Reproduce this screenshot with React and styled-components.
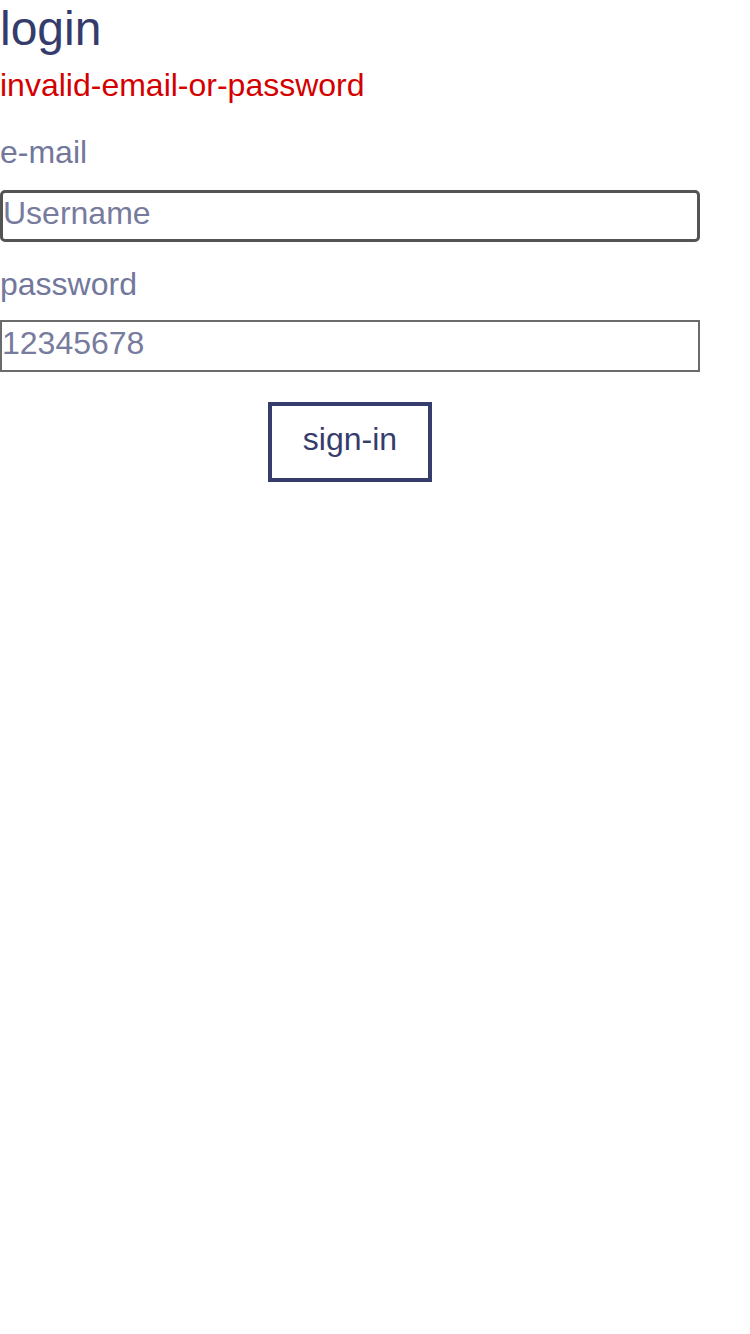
import React from 'react';
import styled, {createGlobalStyle} from 'styled-components';

const GlobalStyle = createGlobalStyle`
    body {
        margin: 0;
        background: #ffffff;
        font-family: "Liberation Sans", Arial, sans-serif;
    }
`

const Form = styled.form`
    width: 700px;
    display: flex;
    flex-direction: column;
`

const Title = styled.h1`
    margin: 0;
    font-size: 48px;
    font-weight: normal;
    line-height: 58px;
    color: #353c6b;
`

const Error = styled.div`
    margin-top: 7px;
    font-size: 32px;
    line-height: 40px;
    color: #d40000;
`

const Label = styled.label`
    margin-top: ${props => props.first ? '27px' : '22px'};
    margin-bottom: ${props => props.first ? '18px' : '16px'};
    font-size: 32px;
    line-height: 40px;
    color: #72779b;
`

const Input = styled.input`
    box-sizing: border-box;
    width: 700px;
    height: 52px;
    margin: 0;
    padding: ${props => props.focused ? '0 0 6px 0' : '0 1px 6px 0'};
    border: ${props => props.focused ? '3px solid #545454' : '2px solid #6b6b6b'};
    border-radius: ${props => props.focused ? '5px' : '0'};
    font-family: "Liberation Sans", Arial, sans-serif;
    font-size: 32px;
    color: #353c6b;
    background: #ffffff;
    outline: none;

    &::placeholder {
        color: #777b9e;
        opacity: 1;
    }
`

const Button = styled.button`
    align-self: center;
    margin-top: 30px;
    padding: 15px 31px 20px;
    border: 4px solid #363d6c;
    border-radius: 0;
    background: #ffffff;
    font-family: "Liberation Sans", Arial, sans-serif;
    font-size: 32px;
    line-height: 37px;
    color: #363d6c;
    cursor: pointer;
`

export default function App() {
    return (
        <>
            <GlobalStyle />
            <Form onSubmit={e => e.preventDefault()}>
                <Title>login</Title>
                <Error>invalid-email-or-password</Error>
                <Label first htmlFor="email">e-mail</Label>
                <Input id="email" type="text" placeholder="Username" focused />
                <Label htmlFor="password">password</Label>
                <Input id="password" type="password" placeholder="12345678" />
                <Button type="submit">sign-in</Button>
            </Form>
        </>
    );
}
